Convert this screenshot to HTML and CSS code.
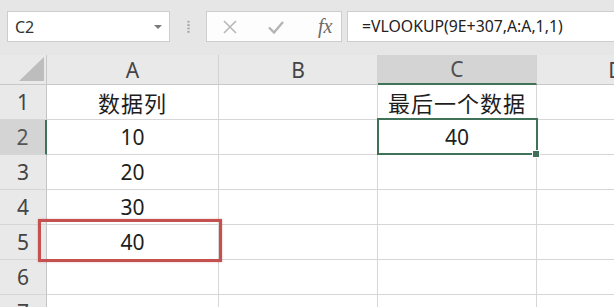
FILE: index.html
```html
<!DOCTYPE html>
<html>

<head>
  <meta charset="utf-8">
  <link rel="stylesheet" href="styles.css">
</head>

<body>

  <div class="toolbar">
    <div class="namebox">
      <span>C2</span>
      <span class="caret"></span>
    </div>
    <div class="grip"></div>
    <div class="fxbtns">
      <svg class="ico" width="16" height="16" viewBox="0 0 16 16">
        <path d="M2 2 L14 14 M14 2 L2 14" stroke="#b8b8b8" stroke-width="1.6" fill="none" />
      </svg>
      <svg class="ico" width="18" height="16" viewBox="0 0 18 16">
        <path d="M2 8.5 L7 13.5 L16 3" stroke="#b4b4b4" stroke-width="2.4" fill="none" />
      </svg>
      <span class="fx"><i>f</i><i>x</i></span>
    </div>
    <div class="formula">=VLOOKUP(9E+307,A:A,1,1)</div>
  </div>

  <div class="sheet">
    <div class="corner"><span class="tri"></span></div>
    <div class="colhead">A</div>
    <div class="colhead">B</div>
    <div class="colhead active">C</div>
    <div class="colhead">D</div>

    <div class="rowhead">1</div>
    <div class="cell cjk">数据列</div>
    <div class="cell"></div>
    <div class="cell cjk">最后一个数据</div>
    <div class="cell"></div>

    <div class="rowhead active">2</div>
    <div class="cell">10</div>
    <div class="cell"></div>
    <div class="cell selected">40</div>
    <div class="cell"></div>

    <div class="rowhead">3</div>
    <div class="cell">20</div>
    <div class="cell"></div>
    <div class="cell"></div>
    <div class="cell"></div>

    <div class="rowhead">4</div>
    <div class="cell">30</div>
    <div class="cell"></div>
    <div class="cell"></div>
    <div class="cell"></div>

    <div class="rowhead">5</div>
    <div class="cell">40</div>
    <div class="cell"></div>
    <div class="cell"></div>
    <div class="cell"></div>

    <div class="rowhead">6</div>
    <div class="cell"></div>
    <div class="cell"></div>
    <div class="cell"></div>
    <div class="cell"></div>

    <div class="rowhead">7</div>
    <div class="cell"></div>
    <div class="cell"></div>
    <div class="cell"></div>
    <div class="cell"></div>

    <!-- red highlight around A5 -->
    <div class="mark"></div>
  </div>

</body>

</html>
```

FILE: styles.css
```css
html,
body {
  margin: 0;
  height: 100%;
  overflow: hidden;
  background: #ffffff;
  font-family: "Noto Sans", "Noto Sans CJK SC", sans-serif;
}

.toolbar {
  display: flex;
  align-items: flex-start;
  height: 55px;
  padding: 11px 0 0 7px;
  box-sizing: border-box;
  background: #e6e6e6;
}

.toolbar > * {
  flex: none;
}

.namebox {
  display: flex;
  align-items: center;
  justify-content: space-between;
  width: 163px;
  height: 31px;
  padding: 0 7px 0 7px;
  box-sizing: border-box;
  background: #ffffff;
  border: 1px solid #cdcdcd;
  font-size: 16px;
  color: #333333;
}

.caret {
  width: 0;
  height: 0;
  border-left: 4px solid transparent;
  border-right: 4px solid transparent;
  border-top: 4px solid #7a7a7a;
}

.grip {
  width: 3px;
  height: 13px;
  margin: 9px 16px 0 17px;
  background: radial-gradient(circle, #a9a9a9 1px, transparent 1.3px) 0 0 / 3px 3.4px repeat-y;
}

.fxbtns {
  display: flex;
  align-items: center;
  width: 136px;
  height: 31px;
  padding-left: 15px;
  box-sizing: border-box;
  background: #fdfdfd;
  border: 1px solid #cdcdcd;
}

.ico {
  display: block;
  margin-right: 29px;
}

.fx {
  font-family: "Liberation Serif", serif;
  font-size: 20px;
  color: #6a6a6a;
  margin-left: 4px;
}

.formula {
  width: 300px;
  height: 31px;
  margin-left: 5px;
  padding-left: 14px;
  box-sizing: border-box;
  background: #ffffff;
  border: 1px solid #cdcdcd;
  font-size: 15.8px;
  line-height: 29px;
  color: #222222;
}

.sheet {
  position: relative;
  display: grid;
  grid-template-columns: 47px 172px 159px 159px 159px;
  grid-template-rows: 30px repeat(7, 35px);
}

.corner,
.colhead,
.rowhead,
.cell {
  display: flex;
  align-items: center;
  justify-content: center;
  box-sizing: border-box;
  font-size: 21px;
}

.corner {
  position: relative;
  background: #e9e9e9;
  border-right: 1px solid #c8c8c8;
  border-bottom: 1px solid #c8c8c8;
}

.tri {
  position: absolute;
  right: 2px;
  bottom: 3px;
  width: 0;
  height: 0;
  border-left: 25px solid transparent;
  border-bottom: 24px solid #bdbdbd;
}

.colhead {
  background: #e9e9e9;
  border-right: 1px solid #d2d2d2;
  border-bottom: 1px solid #c8c8c8;
  color: #444444;
}

.colhead.active {
  background: #d4d4d4;
  border-bottom: 2px solid #3f7258;
  color: #505050;
}

.rowhead {
  background: #e9e9e9;
  border-right: 1px solid #c4c4c4;
  border-bottom: 1px solid #d6d6d6;
  color: #444444;
}

.rowhead.active {
  background: #d4d4d4;
  border-right: 2px solid #3f7258;
  color: #555555;
}

.cell {
  border-right: 1px solid #d6d6d6;
  border-bottom: 1px solid #d6d6d6;
  color: #1e1e1e;
}

.cjk {
  font-family: "Noto Sans CJK SC", sans-serif;
  font-size: 22px;
  letter-spacing: 1px;
}

.selected {
  position: relative;
}

.selected:after {
  content: "";
  position: absolute;
  top: -2px;
  left: -1px;
  right: -2px;
  bottom: -1px;
  border: 2px solid #3f7258;
}

.selected:before {
  content: "";
  position: absolute;
  right: -4px;
  bottom: -4px;
  width: 6px;
  height: 6px;
  background: #3f7258;
  border: 1px solid #ffffff;
  z-index: 1;
}

.mark {
  position: absolute;
  left: 38px;
  top: 164px;
  width: 184px;
  height: 43px;
  box-sizing: border-box;
  border: 3px solid #c4504f;
  box-shadow: 0 0 2px rgba(196, 80, 79, .4);
}
```
